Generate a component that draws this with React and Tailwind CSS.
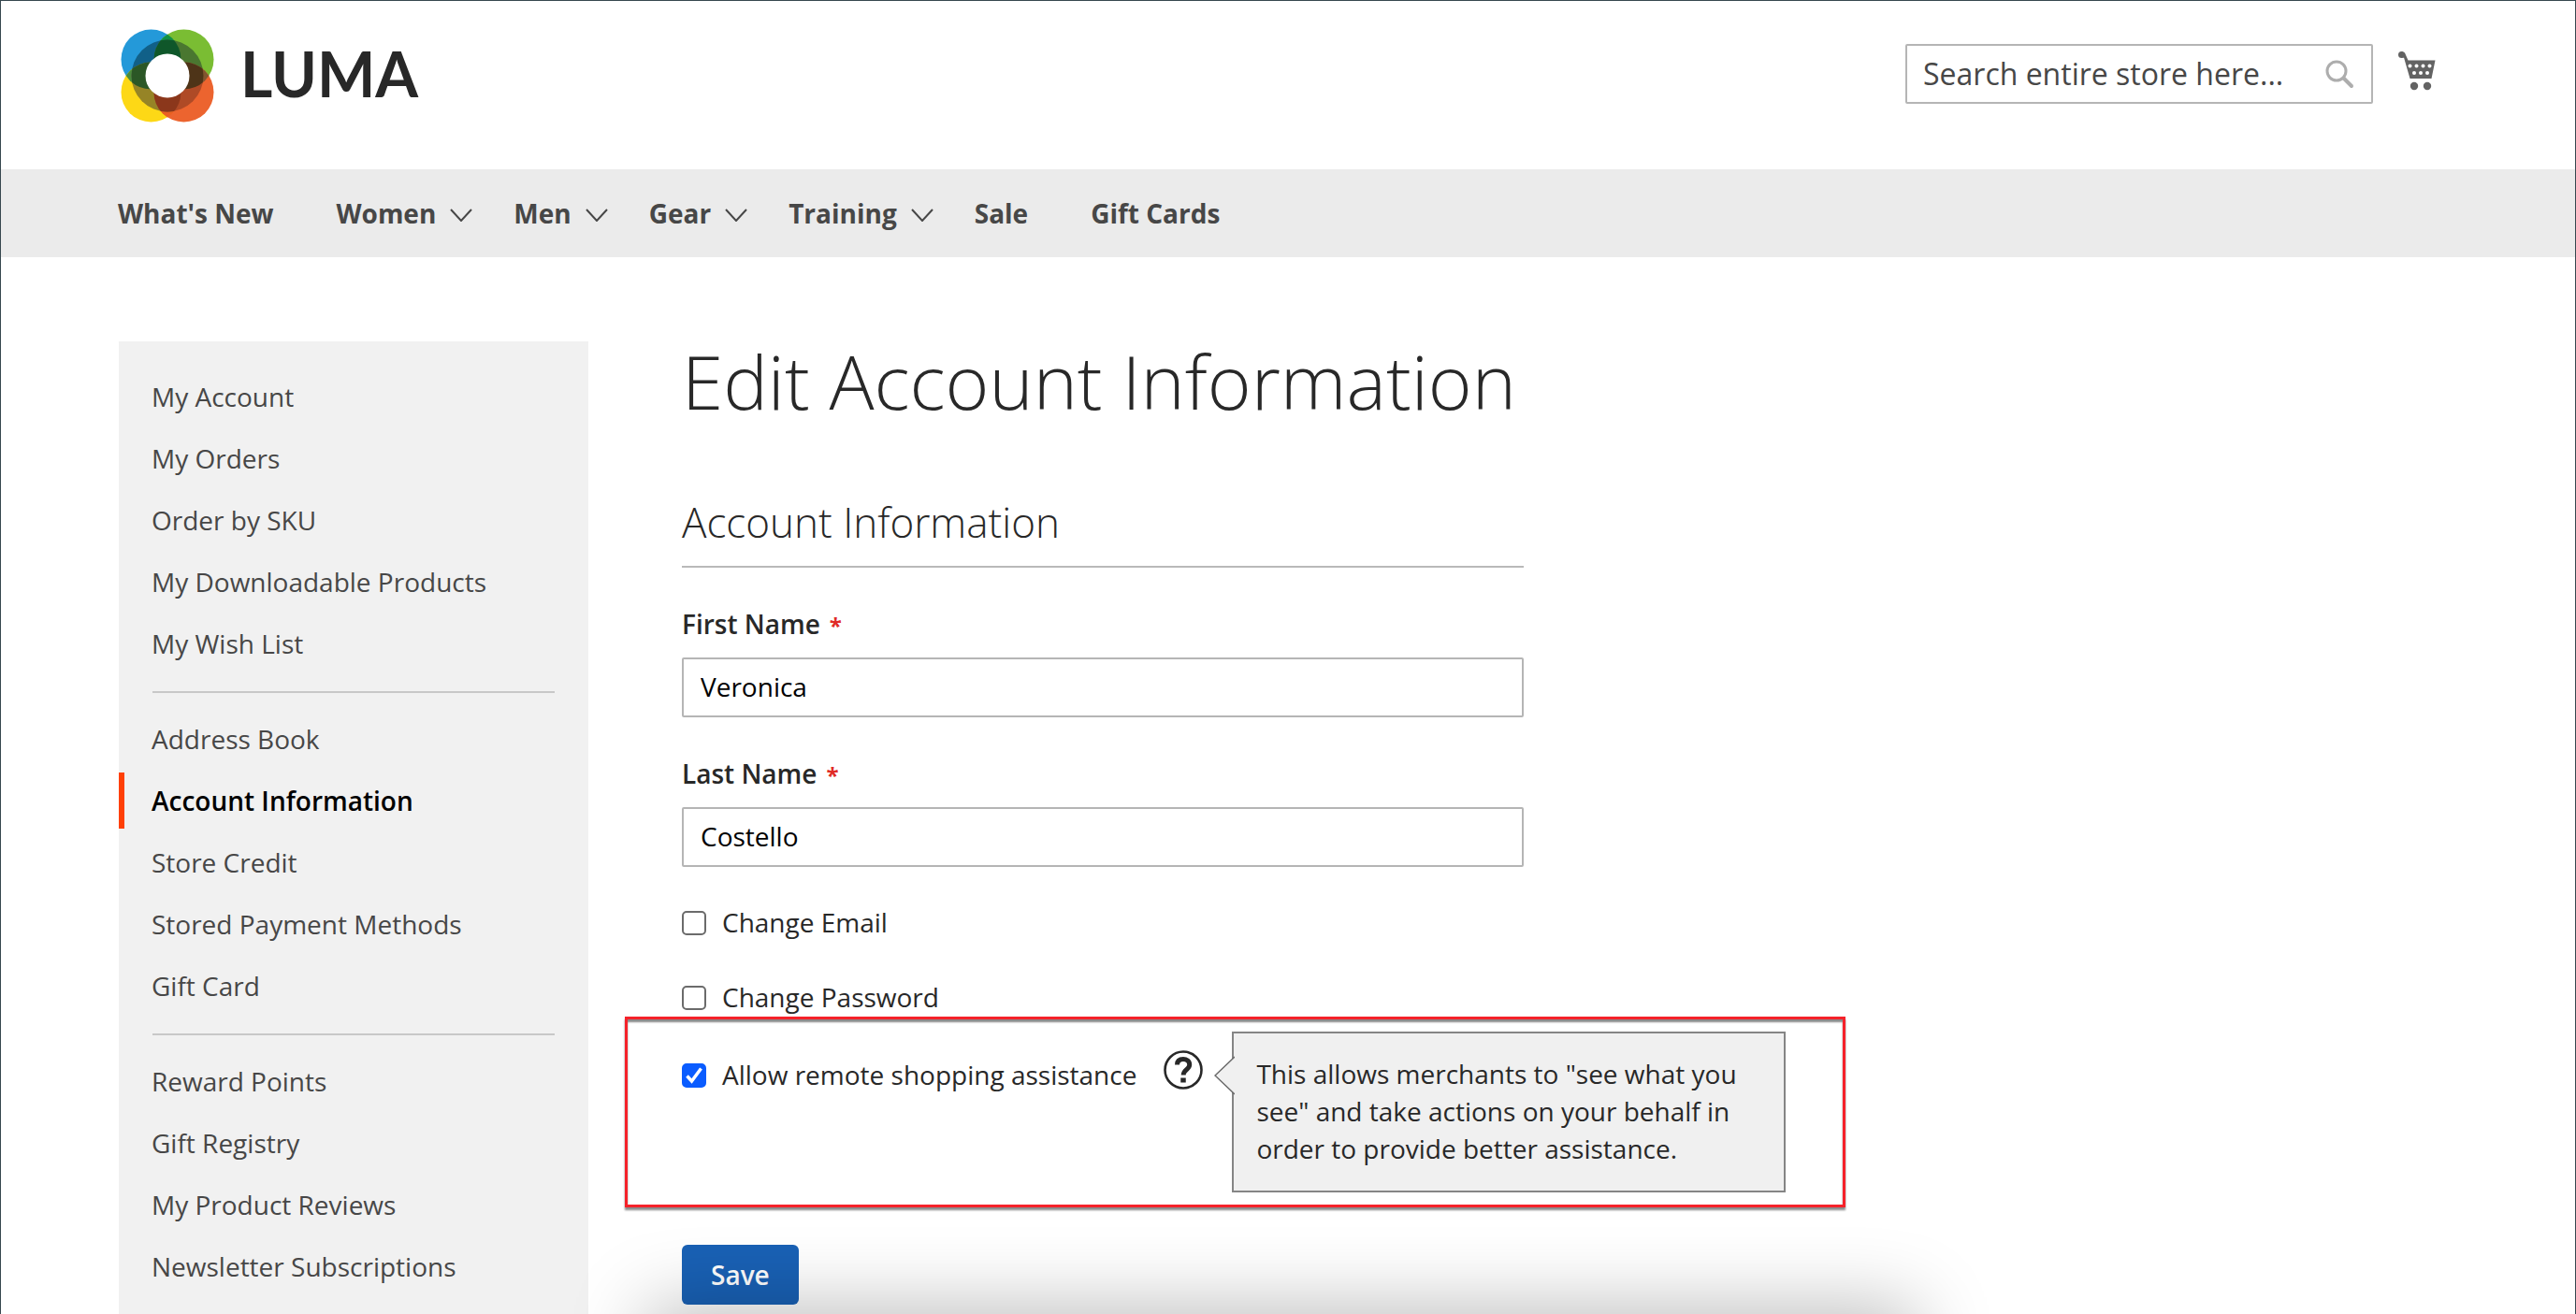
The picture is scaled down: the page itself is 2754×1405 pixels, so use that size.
import React from "react";

const nav = [
  { label: "What's New" },
  { label: "Women", menu: true },
  { label: "Men", menu: true },
  { label: "Gear", menu: true },
  { label: "Training", menu: true },
  { label: "Sale" },
  { label: "Gift Cards" },
];

const accountLinks = [
  ["My Account", "My Orders", "Order by SKU", "My Downloadable Products", "My Wish List"],
  ["Address Book", "Account Information", "Store Credit", "Stored Payment Methods", "Gift Card"],
  ["Reward Points", "Gift Registry", "My Product Reviews", "Newsletter Subscriptions"],
];

function LumaMark() {
  return (
    <svg viewBox="0 0 100 100" className="size-25" aria-hidden="true">
      <defs>
        <clipPath id="tl"><circle cx="32.5" cy="32.5" r="32" /></clipPath>
        <clipPath id="tr"><circle cx="67.5" cy="32.5" r="32" /></clipPath>
        <clipPath id="bl"><circle cx="32.5" cy="67.5" r="32" /></clipPath>
        <clipPath id="br"><circle cx="67.5" cy="67.5" r="32" /></clipPath>
        <clipPath id="mid"><circle cx="50" cy="50" r="38.5" /></clipPath>
      </defs>
      <circle cx="32.5" cy="32.5" r="32" fill="#2499d9" />
      <circle cx="67.5" cy="32.5" r="32" fill="#7abd33" />
      <circle cx="32.5" cy="67.5" r="32" fill="#fdd816" />
      <circle cx="67.5" cy="67.5" r="32" fill="#ec642f" />
      <g clipPath="url(#tl)"><circle cx="67.5" cy="32.5" r="32" fill="#109044" /></g>
      <g clipPath="url(#tl)"><circle cx="32.5" cy="67.5" r="32" fill="#4a8b3c" /></g>
      <g clipPath="url(#br)"><circle cx="67.5" cy="32.5" r="32" fill="#825530" /></g>
      <g clipPath="url(#br)"><circle cx="32.5" cy="67.5" r="32" fill="#ea6021" /></g>
      <g clipPath="url(#mid)">
        <circle cx="32.5" cy="32.5" r="32" fill="#116088" />
        <circle cx="67.5" cy="32.5" r="32" fill="#4a7730" />
        <circle cx="32.5" cy="67.5" r="32" fill="#968426" />
        <circle cx="67.5" cy="67.5" r="32" fill="#af4a26" />
        <g clipPath="url(#tl)"><circle cx="67.5" cy="32.5" r="32" fill="#0f572a" /></g>
        <g clipPath="url(#tl)"><circle cx="32.5" cy="67.5" r="32" fill="#2b5726" /></g>
        <g clipPath="url(#br)"><circle cx="67.5" cy="32.5" r="32" fill="#4e3418" /></g>
        <g clipPath="url(#br)"><circle cx="32.5" cy="67.5" r="32" fill="#8b371b" /></g>
      </g>
      <circle cx="50" cy="50" r="23.5" fill="#fff" />
    </svg>
  );
}

function Chevron() {
  return (
    <svg viewBox="0 0 24 14" className="mt-1 h-3.5 w-6" fill="none" stroke="#474747" strokeWidth="2" aria-hidden="true">
      <path d="M1 1l11 12L23 1" />
    </svg>
  );
}

function SearchIcon() {
  return (
    <svg viewBox="0 0 32 32" className="size-8" fill="none" stroke="#adadad" aria-hidden="true">
      <circle cx="13" cy="13" r="10" strokeWidth="3" />
      <path d="M20.500 20.500l8.500 8.500" strokeWidth="4" strokeLinecap="round" />
    </svg>
  );
}

function CartIcon() {
  const holes = [[12.5, 15.500], [19.500, 15.500], [26.500, 15.500], [33.500, 15.500], [17, 23], [24, 23], [31, 23]];
  return (
    <svg viewBox="0 0 40 42" className="h-[42px] w-10" fill="#636363" aria-hidden="true">
      <circle cx="3.500" cy="3.500" r="3.500" />
      <path d="M3.500 0L7 1.500 10.500 9.500H39.500L35.500 29H12.500L6 6.500H3z" />
      <circle cx="17" cy="37" r="4.200" />
      <circle cx="31" cy="37" r="4.200" />
      {holes.map(([x, y]) => (
        <circle key={x} cx={x} cy={y} r="2" fill="#fff" />
      ))}
    </svg>
  );
}

function HelpIcon() {
  return (
    <svg viewBox="0 0 42 42" className="size-[42px]" fill="none" stroke="#282828" aria-hidden="true">
      <circle cx="21" cy="21" r="19.500" strokeWidth="2.600" />
      <path d="M14.500 15.500C14.500 11 17.500 9.500 21 9.500s6.700 2 6.700 6c0 5-6.500 5.500-6.500 11" strokeWidth="5" />
      <path d="M21 29.500v5" strokeWidth="5.500" />
    </svg>
  );
}

function TextField({ id, label, value }) {
  return (
    <div className="mt-9 flex flex-col gap-3">
      <label htmlFor={id} className="text-[28px] leading-12 font-semibold">
        {label}
        <span className="ml-2.5 text-2xl font-bold text-[#e02b27]">*</span>
      </label>
      <input
        id={id}
        type="text"
        defaultValue={value}
        className="h-16 w-full rounded-xs border-2 border-[#b5b5b5] bg-white px-[18px] pb-0.5 text-[28px] text-black outline-none"
      />
    </div>
  );
}

function CheckField({ id, label, checked }) {
  return (
    <div className="flex h-10 items-center gap-[17px]">
      <span className="relative flex size-[26px] shrink-0">
        <input
          id={id}
          type="checkbox"
          defaultChecked={checked}
          className="peer size-[26px] appearance-none rounded-[5px] border-2 border-[#6b6b6b] bg-white checked:border-[#0a5cff] checked:bg-[#0a5cff]"
        />
        <svg viewBox="0 0 26 26" className="pointer-events-none absolute inset-0 hidden peer-checked:block" fill="none" stroke="#fff" strokeWidth="3.500" aria-hidden="true">
          <path d="M5.500 13.500l5 5.500L20.500 5.500" />
        </svg>
      </span>
      <label htmlFor={id} className="pb-0.5 text-[28px] leading-10">{label}</label>
    </div>
  );
}

export default function App() {
  return (
    <div className="relative flex min-h-screen flex-col overflow-hidden border-x border-t border-[#37474f] bg-white font-['Open_Sans','Noto_Sans',sans-serif] text-[#282828]">
      <header className="flex h-45 items-start justify-between pr-[149px] pl-32">
        <a href="#home" className="mt-[30px] flex items-center gap-7" aria-label="Luma">
          <LumaMark />
          <span className="pb-1 font-['Lato',sans-serif] text-[66px] leading-24 font-bold">LUMA</span>
        </a>
        <div className="mt-[46px] flex items-start gap-[27px]">
          <form className="flex h-16 w-[500px] items-center rounded-xs border-2 border-[#b5b5b5] pr-[18px]" role="search">
            <input
              type="text"
              aria-label="Search"
              placeholder="Search entire store here..."
              className="h-full min-w-0 flex-1 pb-0.5 pl-[17px] text-[32px] outline-none placeholder:text-[#474747] placeholder:opacity-100"
            />
            <button type="button" aria-label="Search"><SearchIcon /></button>
          </form>
          <a href="#cart" aria-label="My Cart" className="mt-2"><CartIcon /></a>
        </div>
      </header>

      <nav className="flex h-[94px] items-center bg-[#ebebeb] pl-[125px] text-[28px] font-bold text-[#474747]">
        {nav.map(({ label, menu }) => (
          <a key={label} href="#nav" className={menu ? "mr-11 flex items-center gap-[15px]" : "mr-[67px]"}>
            {label}
            {menu && <Chevron />}
          </a>
        ))}
      </nav>

      <div className="flex flex-1 items-stretch gap-25 pt-[90px] pl-[126px]">
        <aside className="w-[502px] shrink-0 bg-[#f1f1f1] pt-[26px]">
          {accountLinks.map((group, i) => (
            <div key={group[0]}>
              {i > 0 && <hr className="mx-9 mt-[18px] mb-4 border-t-2 border-[#c8c8c8]" />}
              <ul>
                {group.map((label) => (
                  <li key={label} className="py-[3px]">
                    <a
                      href="#account"
                      className={
                        label === "Account Information"
                          ? "block border-l-6 border-[#ff4006] pl-[29px] text-[28px] leading-15 font-semibold text-black"
                          : "block pl-[35px] text-[28px] leading-15 text-[#474747]"
                      }
                    >
                      {label}
                    </a>
                  </li>
                ))}
              </ul>
            </div>
          ))}
        </aside>

        <main className="w-[900px]">
          <h1 className="text-[80px] leading-[84px] font-light">Edit Account Information</h1>
          <form>
            <h2 className="mt-19 border-b-2 border-[#b9b9b9] pb-3.5 text-[44px] leading-[66px] font-light">Account Information</h2>
            <TextField id="first" label="First Name" value="Veronica" />
            <TextField id="last" label="Last Name" value="Costello" />
            <div className="mt-10 flex flex-col gap-10">
              <CheckField id="email" label="Change Email" />
              <CheckField id="password" label="Change Password" />
            </div>
            <div className="-mr-[344px] -ml-[61px] flex h-[204px] items-start border-3 border-[#f5222a] pt-[13px] pl-[58px] shadow-[0_3px_2px_#8a8a8a,inset_0_3px_2px_#8a8a8a]">
              <div className="mt-[27px]"><CheckField id="assist" label="Allow remote shopping assistance" checked /></div>
              <button type="button" aria-label="What is this?" className="mt-5 ml-[29px]"><HelpIcon /></button>
              <div role="tooltip" className="relative ml-[31px] w-[592px] border-2 border-[#858585] bg-[#f0f0f0] px-6 pt-[23px] pb-[25px] text-[28px] leading-10">
                <svg viewBox="0 0 22 42" className="absolute top-6 -left-[21px] h-[42px] w-[22px]" aria-hidden="true">
                  <path d="M22 1L1 21l21 20" fill="#f0f0f0" stroke="#6a6a6a" strokeWidth="1.500" />
                </svg>
                This allows merchants to "see what you see" and take actions on your behalf in order to provide better assistance.
              </div>
            </div>
            <button type="submit" className="mt-10 h-16 rounded-md bg-[#1961b5] px-[31px] text-[28px] font-semibold text-white">Save</button>
          </form>
        </main>
      </div>
      <div className="pointer-events-none absolute top-full right-[714px] left-[700px] h-20 shadow-[0_0_80px_10px_rgba(0,0,0,0.25)]" />
    </div>
  );
}
